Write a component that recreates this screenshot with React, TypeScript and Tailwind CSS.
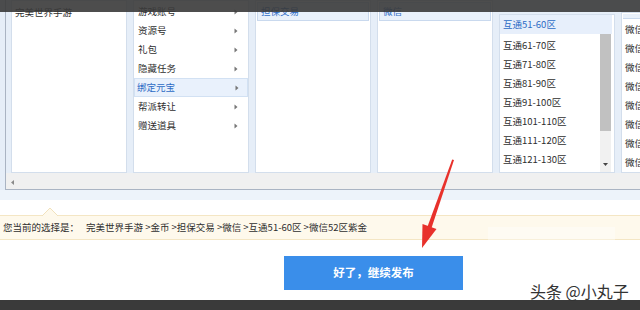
import React from "react";

const subItems = ["游戏账号", "资源号", "礼包", "隐藏任务", "绑定元宝", "帮派转让", "赠送道具"];
const zones = ["互通61-70区", "互通71-80区", "互通81-90区", "互通91-100区", "互通101-110区", "互通111-120区", "互通121-130区"];
const wxItems = ["微信51区", "微信52区", "微信53区", "微信54区", "微信55区", "微信56区", "微信57区", "微信58区"];

function Caret() {
  return (
    <svg width="4" height="6" viewBox="0 0 4 6" className="shrink-0">
      <path d="M0.5 0.5 L3.5 3 L0.5 5.5 Z" fill="#777" />
    </svg>
  );
}

function HeaderCol({ title }: { title: string }) {
  return (
    <div className="w-[116px] shrink-0 bg-white border border-[#d3deec] flex flex-col">
      <div className="h-[19px] m-px bg-[#e9f1fb] border border-[#c9d9ee] flex items-center pl-[3px] text-[#2d6cc5]">
        {title}
      </div>
    </div>
  );
}

export default function App() {
  return (
    <div className="relative w-[640px] h-[310px] overflow-hidden bg-white text-[#2e2e2e] text-[9.5px] leading-none font-['Noto_Sans_CJK_SC',sans-serif]">
      {/* category selector panel */}
      <div className="h-[190px] bg-[#e6eef8] pl-[5px]">
        <div className="h-full border-l border-b border-[#aab4c3] flex flex-col">
          <div className="h-[173px] flex gap-[6px] pl-[5px]">
            {/* game */}
            <div className="w-[116px] shrink-0 bg-white border border-[#d3deec] pt-[2px]">
              <div className="h-[19px] flex items-center pl-[3px]">完美世界手游</div>
            </div>

            {/* sub category */}
            <div className="w-[116px] shrink-0 bg-white border border-[#d3deec] pt-[1px]">
              {subItems.map((s) => {
                const sel = s === "绑定元宝";
                return (
                  <div
                    key={s}
                    className={
                      sel
                        ? "h-[19px] flex items-center justify-between pl-[2px] pr-[8px] bg-[#e9f1fc] border border-[#d2e1f3] text-[#2d6cc5]"
                        : "h-[19px] flex items-center justify-between pl-[3px] pr-[9px] border border-transparent"
                    }
                  >
                    <span>{s}</span>
                    <Caret />
                  </div>
                );
              })}
            </div>

            <HeaderCol title="担保交易" />
            <HeaderCol title="微信" />

            {/* zones */}
            <div className="w-[116px] shrink-0 mt-[14px] bg-white border border-[#d3deec] flex flex-col">
              <div className="h-[19px] mr-[2px] bg-[#e7effb] flex items-center pl-[3px] text-[#2d6cc5]">互通51-60区</div>
              <div className="flex-1 flex">
                <div className="flex-1 pt-[2px]">
                  {zones.map((z) => (
                    <div key={z} className="h-[19px] flex items-center pl-[3px]">{z}</div>
                  ))}
                </div>
                <div className="w-[11px] mr-[3px] bg-[#f1f1f1] flex flex-col">
                  <div className="h-[97px] bg-[#c1c1c1]" />
                  <div className="flex-1 flex items-end justify-center pb-[6px]">
                    <svg width="5" height="3" viewBox="0 0 5 3">
                      <path d="M0 0 H5 L2.5 3 Z" fill="#444" />
                    </svg>
                  </div>
                </div>
              </div>
            </div>

            {/* wx list, clipped by the window edge */}
            <div className="w-[116px] shrink-0 mt-[12px] bg-white border border-[#d3deec] flex flex-col">
              <div className="h-[7px] m-px bg-[#e9f1fb] border-b border-[#c9d9ee]" />
              <div>
                {wxItems.map((w) => (
                  <div key={w} className="h-[19px] flex items-center pl-[3px]">{w}</div>
                ))}
              </div>
            </div>
          </div>

          {/* horizontal scrollbar */}
          <div className="flex-1 bg-[#f0f0f0] flex items-center pl-[5px] pt-[3px]">
            <svg width="3" height="5" viewBox="0 0 3 5">
              <path d="M3 0 V5 L0 2.5 Z" fill="#8a8a8a" />
            </svg>
          </div>
        </div>
      </div>

      <div className="h-[10px] bg-[#edf3fa]" />

      {/* current selection */}
      <div className="relative mt-[15px] h-[25px] bg-[#fef9ec] border-t border-b border-[#f4e6c4] flex items-center pl-[3px]">
        <svg width="16" height="9" viewBox="0 0 16 9" className="absolute left-[42px] top-[-9px]">
          <path d="M0 9 L8 1 L16 9 Z" fill="#fef9ec" />
          <path d="M0 9 L8 1 L16 9" fill="none" stroke="#f1e2bd" strokeWidth="1" />
        </svg>
        <span className="w-[83px]">您当前的选择是：</span>
        <span>完美世界手游 &gt;金币 &gt;担保交易 &gt;微信 &gt;互通51-60区 &gt;微信52区紫金</span>
      </div>

      {/* submit */}
      <div className="mt-[16px] h-[34px] pl-[284px]">
        <button className="w-[179px] h-[34px] bg-[#3a8eea] text-white text-[11.5px] font-bold">
          好了，继续发布
        </button>
      </div>

      <div className="absolute left-0 bottom-0 w-full h-[10px] bg-[#3a3a3a]" />

      {/* watermark */}
      <div className="absolute left-[488px] top-[227px] w-[127px] h-[63px] bg-white/40" />
      <div className="absolute left-[530px] top-[282px] text-[16px] leading-[18px] text-[#333]">头条 @小丸子</div>

      {/* top dark overlay */}
      <div className="absolute left-0 top-0 w-full h-[12px] bg-[#3a3a3a]/90" />

      {/* red annotation arrow */}
      <svg className="absolute left-0 top-0 pointer-events-none" width="640" height="310" viewBox="0 0 640 310">
        <path d="M454 160 L452.2 159.6 L427 228 L431 229.4 Z" fill="#e8312b" />
        <path d="M422 248 L436.5 229 L422.5 224 Z" fill="#e8312b" />
      </svg>
    </div>
  );
}
